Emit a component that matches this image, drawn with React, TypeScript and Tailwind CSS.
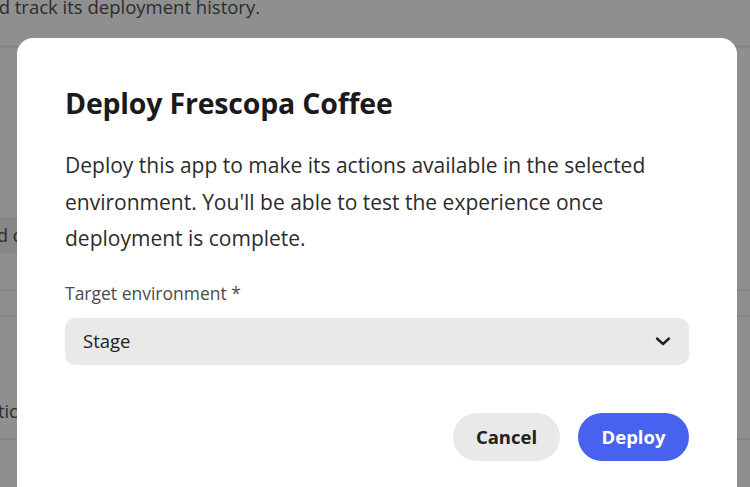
import React from 'react';

function Chevron() {
  return (
    <svg width="16" height="12" viewBox="0 0 16 12" fill="none" className="text-[#222]">
      <path d="M2 3.5 L8 9 L14 3.5" stroke="currentColor" strokeWidth="2.4" strokeLinecap="round" strokeLinejoin="round" />
    </svg>
  );
}

function PageBehind() {
  return (
    <div className="h-full w-full text-[#2c2c2c]">
      <p className="-mt-[7px] -ml-[23px] text-[18.5px] leading-[28px] whitespace-nowrap">and track its deployment history.</p>
      <div className="mt-[24px] h-[3px] bg-[#858585]" />
      <div className="mt-[169px] h-[36px] w-[17px] overflow-hidden bg-[#878787]">
        <span className="-ml-[3px] block text-[18px] leading-[36px] whitespace-nowrap">d d</span>
      </div>
      <div className="mt-[36px] h-[2px] bg-[#858585]" />
      <div className="mt-[24px] h-[2px] bg-[#858585]" />
      <div className="mt-[80px] w-[17px] overflow-hidden">
        <span className="-ml-[2px] block text-[18px] leading-[28px] whitespace-nowrap">tic</span>
      </div>
      <div className="mt-[13px] h-[2px] bg-[#858585]" />
    </div>
  );
}

export default function App() {
  return (
    <div className="relative w-[750px] h-[487px] overflow-hidden bg-[#8f8f8f]" style={{ fontFamily: '"Open Sans", Lato, sans-serif' }}>
      <PageBehind />

      <div className="absolute left-[17px] top-[38px] w-[720px] h-[480px] rounded-[16px] bg-white px-[48px] pt-[47px]">
        <h2 className="text-[28.5px] font-bold leading-[36px] tracking-[-0.2px] text-[#1b1b1b]">Deploy Frescopa Coffee</h2>

        <p className="mt-[26px] text-[21px] leading-[36.5px] text-[#2c2c2c]">
          Deploy this app to make its actions available in the selected environment. You'll be able to test the experience once deployment is complete.
        </p>

        <label className="mt-[24px] block text-[17.5px] leading-[24px] text-[#4b4b4b]">
          Target environment <span className="text-[#4b4b4b]">*</span>
        </label>

        <button className="mt-[13px] flex h-[47px] w-full items-center justify-between rounded-[10px] bg-[#e9e9e9] pl-[18px] pr-[18px] text-left">
          <span className="text-[18.5px] text-[#222]">Stage</span>
          <Chevron />
        </button>

        <div className="mt-[48px] flex justify-end gap-[18px]">
          <button className="h-[48px] w-[107px] rounded-full bg-[#e9e9e9] text-[18.5px] font-bold text-[#222]">Cancel</button>
          <button className="h-[48px] w-[111px] rounded-full bg-[#4862f0] text-[18.5px] font-bold text-white">Deploy</button>
        </div>
      </div>
    </div>
  );
}
